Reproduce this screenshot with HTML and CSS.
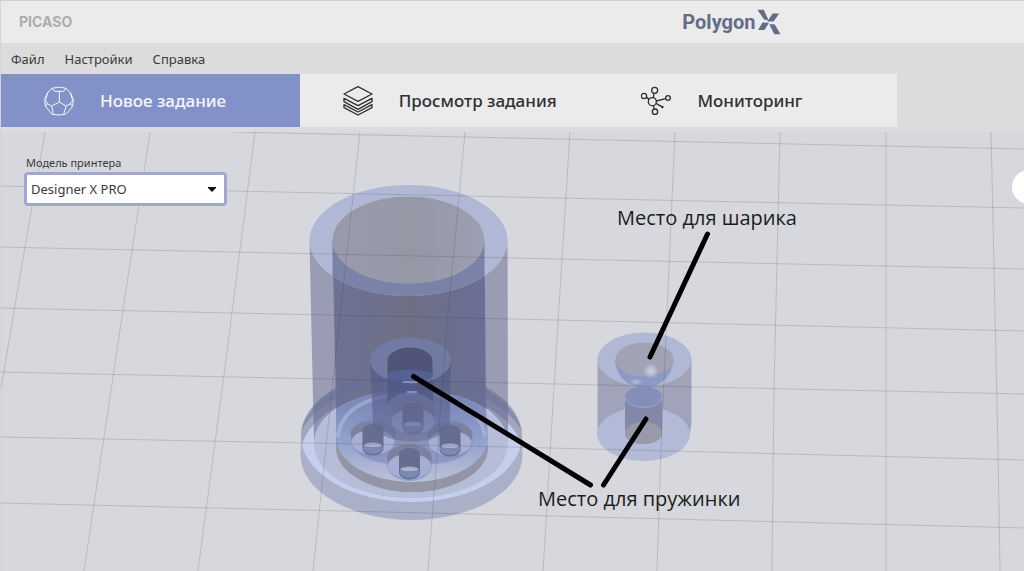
FILE: index.html
```html
<!DOCTYPE html>
<html lang="ru">
<head>
<meta charset="utf-8">
<meta name="viewport" content="width=device-width, initial-scale=1">
<title>Polygon X</title>
<link rel="stylesheet" href="styles.css">
</head>
<body>
<div class="app">
  <header class="titlebar">
    <span class="vendor">PICASO</span>
    <div class="product">
      <span class="product-name">Polygon</span>
      <svg class="product-mark" viewBox="409 28 72 79" aria-hidden="true">
        <path d="M410 30h19l15 33-14-3zM456 42h20l-17 24h-19zM412 92h19l14-22-20-1zM446 74h16l18 31h-19z"/>
      </svg>
    </div>
  </header>

  <nav class="menu" aria-label="Меню">
    <button class="menu-item" type="button">Файл</button>
    <button class="menu-item" type="button">Настройки</button>
    <button class="menu-item" type="button">Справка</button>
  </nav>

  <nav class="tabs" aria-label="Разделы">
    <button class="tab tab-active" type="button">
      <svg class="tab-icon" viewBox="131 255 90 90" aria-hidden="true">
        <path d="M155 262l22-4 20 4 13 13 9 22-2 18-10 14-11 11-20 2-21-2-9-11-11-14-2-20 9-20zM155 262l8 9h27l7-9M177 271v32M154 315l23-12 20 12-7 26M154 315l5 26M154 315l-12-6-7-12M197 315l12-6 9-12M142 309l-7 6M209 309l8 6M142 275l-6 20M210 275l6 20"/>
      </svg>
      <span>Новое задание</span>
    </button>
    <button class="tab" type="button">
      <svg class="tab-icon" viewBox="67 45 90 90" aria-hidden="true">
        <path d="M112 47l42 22-42 22-42-22zM70 82l42 22 42-22v10l-42 23-42-23zM70 101l42 22 42-22v9l-42 22-42-22z"/>
      </svg>
      <span>Просмотр задания</span>
    </button>
    <button class="tab" type="button">
      <svg class="tab-icon" viewBox="63 256 90 90" aria-hidden="true">
        <circle cx="97" cy="303" r="12"/><circle cx="104" cy="269" r="9"/><circle cx="72" cy="286" r="8"/>
        <circle cx="144" cy="292" r="7"/><circle cx="105" cy="333" r="8"/><circle cx="127" cy="319" r="2"/>
        <path d="M100 291l2-13M79 290l9 6M109 301l28-7M108 308l17 10M100 315l3 10"/>
      </svg>
      <span>Мониторинг</span>
    </button>
  </nav>

  <main class="workspace">
    <svg class="scene" viewBox="1 132 1023 439" preserveAspectRatio="xMinYMin slice" role="img" aria-label="Модели на рабочем столе">
      <defs>
        <linearGradient id="wall"><stop offset="0" stop-color="#6d7295"/><stop offset=".5" stop-color="#6d7085"/><stop offset="1" stop-color="#6a6f96"/></linearGradient>
        <linearGradient id="bore"><stop offset="0" stop-color="#999bad"/><stop offset=".55" stop-color="#9697a5"/><stop offset="1" stop-color="#9da0b2"/></linearGradient>
        <linearGradient id="floor" x2="0" y2="1"><stop offset="0" stop-color="#7581b0"/><stop offset=".55" stop-color="#92a0ce"/><stop offset="1" stop-color="#bcc1d6"/></linearGradient>
        <linearGradient id="stem" x2="0" y2="1"><stop offset="0" stop-color="#555c86" stop-opacity=".9"/><stop offset="1" stop-color="#606a97" stop-opacity=".5"/></linearGradient>
        <radialGradient id="glint"><stop offset="0" stop-color="#d0d3e6"/><stop offset="1" stop-color="#d0d3e6" stop-opacity="0"/></radialGradient>
        <clipPath id="disc-top"><ellipse cx="411.500" cy="436" rx="110.500" ry="66"/></clipPath>
        <clipPath id="bore-front"><path d="M332.500 240h152v60h-152z"/></clipPath>
        <g id="socket">
          <ellipse cx="0" cy="2" rx="22.500" ry="16" fill="#8593c2" fill-opacity=".7"/>
          <ellipse cx="0" cy="-5" rx="22.500" ry="13.500" fill="#7c81a0"/>
          <ellipse cx="0" cy="3" rx="21.500" ry="12.500" fill="#a3afd4"/>
          <path d="M-10.500-9v19a10.500 6.500 0 0 0 21 0v-19a10.500 6 0 0 0-21 0z" fill="#666d90"/>
          <ellipse cx="0" cy="9" rx="10" ry="6" fill="#7d88b2"/>
          <ellipse cx="0" cy="6" rx="9" ry="2" fill="#a9b2ce"/>
        </g>
      </defs>

      <g class="disc">
        <path d="M301 436A110.500 66 0 0 1 522 436L522.500 455A111 65 0 0 1 300.500 455z" fill="#a9b0c8"/>
        <ellipse cx="411.500" cy="436" rx="110.500" ry="66" fill="#a2a7bf"/>
        <ellipse cx="411.500" cy="455" rx="111" ry="65" fill="#c4cfed" clip-path="url(#disc-top)"/>
        <ellipse cx="411" cy="444" rx="97" ry="54" fill="#b5bdd9"/>
      </g>

      <g class="tube">
        <path d="M309.500 240L314 443A97 54 0 0 1 508 443L507.500 240A99 55.500 0 0 1 309.500 240z" fill="#5c6087" fill-opacity=".5"/>
        <path d="M332.500 240L336 409A97 54 0 0 1 486 409L484.500 240A76 43.500 0 0 1 332.500 240z" fill="url(#wall)"/>
        <path d="M336 430V448A76 44 0 0 0 488 448L486 430z" fill="#9496a8"/>
        <path d="M336 409A97 54 0 0 1 486 409L488 437A76 45 0 0 1 336 437z" fill="url(#floor)"/>
        <path d="M338 437Q342 397 411 393Q480 397 485 437" fill="none" stroke="#b0bbdf" stroke-width="4" stroke-opacity=".55"/>
        <path d="M301 431Q315 379 411 372Q507 379 522 431Q495 386 411 382Q327 386 301 431z" fill="#666e97" fill-opacity=".45"/>
        <path d="M309.500 240.500a99 55.500 0 0 1 198 0a99 55.500 0 0 1-198 0zM332.500 240a76 43.500 0 0 0 152 0a76 43.500 0 0 0-152 0z" fill="#b1b8d5" fill-rule="evenodd"/>
        <ellipse cx="408.500" cy="240" rx="76" ry="43.500" fill="url(#bore)"/>
        <path d="M309.500 240.500a99 55.500 0 0 1 198 0a99 55.500 0 0 1-198 0zM332.500 240a76 43.500 0 0 0 152 0a76 43.500 0 0 0-152 0z" fill="#7a82a7" fill-rule="evenodd" clip-path="url(#bore-front)"/>
      </g>

      <g class="sockets">
        <path d="M351 440Q353 415 387 412Q411 398 436 412Q470 415 473 440Q470 462 432 464Q411 470 389 464Q354 460 351 440z" fill="#7f8dbd" fill-opacity=".65"/>
        <ellipse cx="411" cy="434" rx="25" ry="12" fill="#8b92b3"/>
        <use href="#socket" x="373" y="439"/>
        <use href="#socket" x="450" y="440"/>
        <use href="#socket" x="409.500" y="463"/>
        <use href="#socket" x="413" y="418"/>
      </g>

      <g class="stem">
        <path d="M370 360L373 424A39 21 0 0 0 450 424L451 360z" fill="url(#stem)"/>
        <path d="M387.500 361V404A23 13 0 0 1 433 404V361z" fill="#4f5684" fill-opacity=".75"/>
        <ellipse cx="410.500" cy="360.500" rx="40.500" ry="23" fill="#707aa3"/>
        <path d="M387.500 361A22.500 13.500 0 0 1 432.500 361V377A40 23 0 0 1 387.500 379z" fill="#4f5478"/>
        <path d="M387.500 373Q410 366 432.500 373V378Q410 388 387.500 380z" fill="#566193"/>
        <path d="M403 382h16M407 392h10" stroke="#8290bd" stroke-width="2"/>
      </g>

      <g class="insert">
        <path d="M597.500 359.500V434A46.500 27 0 0 0 690 434L691.500 421V359.500z" fill="#a0a3b9"/>
        <ellipse cx="643.500" cy="434" rx="46.500" ry="27" fill="#b3bad8"/>
        <ellipse cx="644.500" cy="359.500" rx="47" ry="27" fill="#b0b8d4"/>
        <path d="M615 359.500C617 397 671 397 673.500 359.500z" fill="#8e99c5"/>
        <ellipse cx="644.500" cy="359.500" rx="29" ry="17" fill="#a1a3b4"/>
        <circle cx="651" cy="371" r="8" fill="url(#glint)"/>
        <ellipse cx="636" cy="382" rx="7" ry="4" fill="url(#glint)" fill-opacity=".6"/>
        <path d="M625 397V433A18.500 11 0 0 0 662 433V397z" fill="#8388a8"/>
        <path d="M625 433A18.500 11 0 0 1 662 433A18.500 11 0 0 1 625 433z" fill="#989aaa"/>
        <ellipse cx="643.500" cy="397" rx="18.500" ry="10.500" fill="#858eb8"/>
        <path d="M625 397A18.500 10.500 0 0 0 662 397" fill="none" stroke="#9aa6cf"/>
      </g>

      <g class="grid">
        <path d="M233 132L512 138L1024 149M0 186L512 197L1024 208M0 247L512 258L1024 269M0 308L512 319L1024 331M0 372L512 383L1024 394M0 437L512 447L1024 460M0 503L512 515L1024 528"/>
        <path d="M45 132L15 305L0 395M150 132L123 310L84 571M255 132L227 352L198 571M360 132L333 380L313 571M465 132L447 325L428 571M570 132L557 338L543 571M675 132L661 448L657 571M780 132L774 388L772 571M886 132V571M991 132L998 448L1000 571"/>
      </g>

      <g class="pointers">
        <path d="M707.500 234L650 357M646 419L603.500 485M413.500 376.500L590.500 485"/>
      </g>
      <text class="note" x="617" y="225">Место для шарика</text>
      <text class="note" x="538" y="506">Место для пружинки</text>
    </svg>

    <form class="printer">
      <label class="printer-label" for="model">Модель принтера</label>
      <div class="printer-field">
        <select class="printer-select" id="model"><option>Designer X PRO</option></select>
        <svg class="printer-caret" viewBox="0 0 8 5" aria-hidden="true"><path d="M0 0h8v1L4 5 0 1z"/></svg>
      </div>
    </form>
    <button class="side-toggle" type="button" aria-label="Открыть панель"></button>
  </main>
</div>
</body>
</html>
```
FILE: styles.css
```css
* { box-sizing: border-box; }

body {
  margin: 0;
  background: #dcdcdc;
  color: #3a3a3a;
  font-family: "Noto Sans", "Open Sans", sans-serif;
}

button, select { font: inherit; color: inherit; }

.app {
  display: flex;
  flex-direction: column;
  min-height: 100vh;
  border-left: 1px solid #d4d4d4;
}

.titlebar {
  display: grid;
  grid-template-columns: 66% 1fr;
  align-items: center;
  height: 43px;
  padding-left: 18px;
  border-top: 1px solid #cfcfcf;
  background: #ebebeb;
}

.vendor {
  color: #adadad;
  font: 700 14px/20px Inter, sans-serif;
}

.product {
  display: flex;
  align-items: center;
  gap: 1px;
  color: #636c89;
}

.product-name { font: 700 20px/24px Roboto, sans-serif; }
.product-mark { width: 24px; height: 26px; fill: currentColor; }

.menu {
  display: flex;
  align-items: center;
  gap: 20px;
  height: 31px;
  padding-left: 10px;
}

.menu-item {
  padding: 0;
  border: 0;
  background: none;
  font-size: 13px;
  line-height: 20px;
}

.tabs {
  display: grid;
  grid-template-columns: repeat(3, 1fr);
  width: 87.6%;
  margin-bottom: 5px;
}

.tab {
  display: flex;
  align-items: center;
  gap: 26px;
  height: 53px;
  padding: 0 0 0 43px;
  border: 0;
  background: #ebebeb;
  color: #303030;
  font-size: 17px;
  font-weight: 500;
  white-space: nowrap;
}

.tab-active { background: #8391c9; color: #f4f6ff; }

.tab-icon {
  flex: none;
  width: 30px;
  height: 30px;
  fill: none;
  stroke: currentColor;
  stroke-width: 4;
  stroke-linejoin: round;
}

.tab-active .tab-icon { stroke-width: 3; }

.workspace {
  position: relative;
  flex: 1;
  overflow: hidden;
  background: #d6d8dd;
}

.scene {
  position: absolute;
  inset: 0;
  width: 100%;
  height: 100%;
}

.grid { fill: none; stroke: #303238; stroke-opacity: .17; }
.pointers { fill: none; stroke: #000; stroke-width: 5; stroke-linecap: round; }
.note { fill: #1c1c1c; font: 400 20px "Open Sans", "Noto Sans", sans-serif; }

.printer {
  position: relative;
  width: 203px;
  margin: 22px 0 0 23px;
}

.printer-label {
  display: block;
  padding-left: 2px;
  font-size: 11px;
  line-height: 18px;
}

.printer-field { position: relative; }

.printer-select {
  display: block;
  width: 100%;
  height: 34px;
  padding: 0 24px 0 4px;
  border: 3px solid #a2a7d2;
  border-radius: 4px;
  background: #fff;
  font-size: 13px;
  appearance: none;
}

.printer-caret {
  position: absolute;
  top: 15px;
  right: 11px;
  width: 8px;
  height: 5px;
  fill: #111;
  pointer-events: none;
}

.side-toggle {
  position: absolute;
  top: 38px;
  right: -22px;
  width: 34px;
  height: 34px;
  border: 0;
  border-radius: 50%;
  background: #fff;
}
```
